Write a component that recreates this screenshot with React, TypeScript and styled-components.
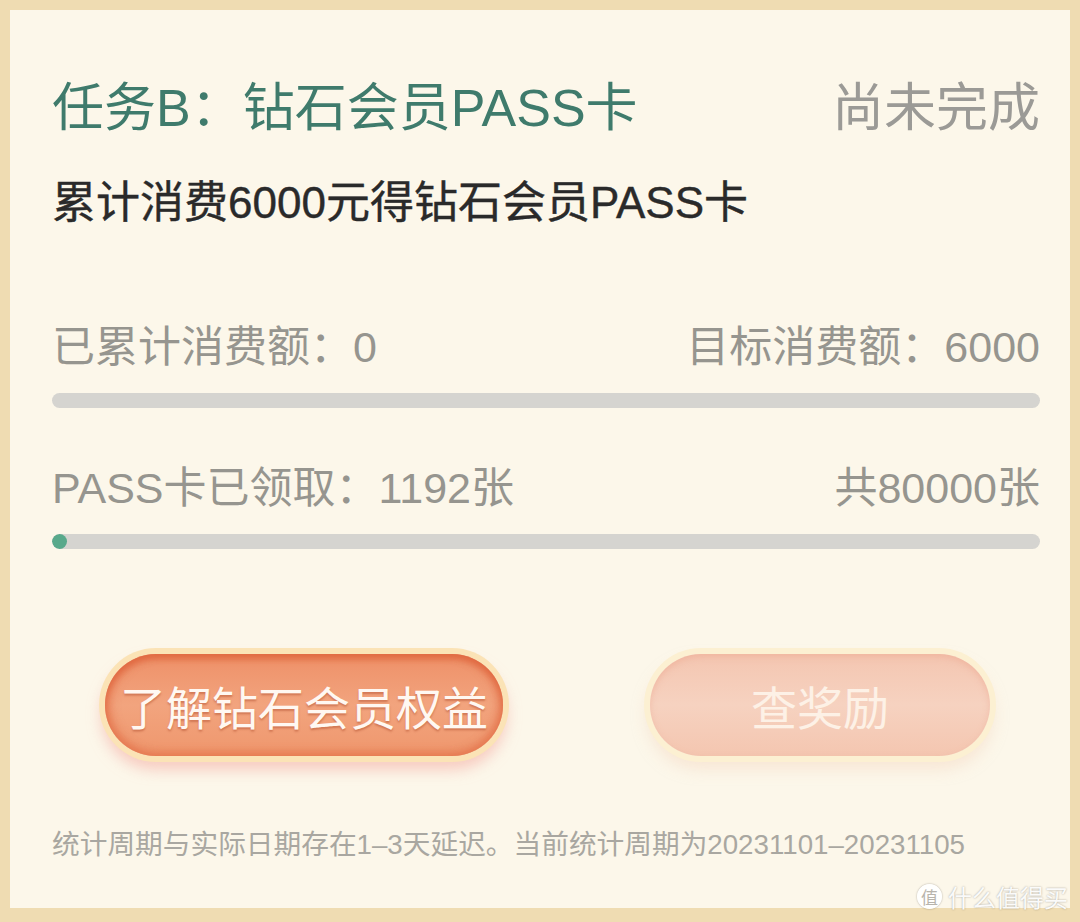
import React from 'react';
import styled, { createGlobalStyle } from 'styled-components';

const FONT = `"Liberation Sans", "Noto Sans CJK SC", sans-serif`;

const GlobalStyle = createGlobalStyle`
  body {
    margin: 0;
    font-family: ${FONT};
    background: #efdcb2;
  }
`;

const Frame = styled.div`
  position: relative;
  width: 1080px;
  height: 922px;
  box-sizing: border-box;
  padding: 10px 10px 14px 10px;
  background: #efdcb2;
`;

const Panel = styled.div`
  height: 100%;
  box-sizing: border-box;
  padding: 68px 30px 0 42px;
  background: #fcf7ea;
  display: flex;
  flex-direction: column;
`;

const HeaderRow = styled.div`
  display: flex;
  justify-content: space-between;
  align-items: center;
  height: 60px;
`;

const Title = styled.div`
  font-family: ${FONT};
  font-size: 52px;
  line-height: 60px;
  color: #3f7b6c;
`;

const Status = styled.div`
  font-family: ${FONT};
  font-size: 52px;
  line-height: 60px;
  color: #9b9a96;
`;

const Subtitle = styled.div`
  margin-top: 37px;
  font-family: ${FONT};
  font-size: 44px;
  line-height: 56px;
  color: #2a2a2a;
  -webkit-text-stroke: 0.4px #2a2a2a;
`;

const StatRow = styled.div<{ $gap: number }>`
  margin-top: ${(p) => p.$gap}px;
  display: flex;
  justify-content: space-between;
  align-items: center;
  height: 50px;
  font-family: ${FONT};
  font-size: 43px;
  line-height: 50px;
  color: #96958f;
`;

const Track = styled.div`
  margin-top: 21px;
  height: 15px;
  border-radius: 8px;
  background: #d5d4d0;
  overflow: hidden;
`;

const Fill = styled.div`
  height: 100%;
  border-radius: 8px;
  background: #58a98b;
`;

const ButtonRow = styled.div`
  margin-top: 105px;
  display: flex;
  justify-content: space-between;
  padding: 0 50px 0 53px;
`;

const PillButton = styled.button<{ $primary?: boolean }>`
  height: 102px;
  width: ${(p) => (p.$primary ? 398 : 340)}px;
  border: none;
  border-radius: 51px;
  font-family: ${FONT};
  font-size: 46px;
  cursor: pointer;
  ${(p) =>
    p.$primary
      ? `
    color: #fff8f2;
    text-shadow: 0 2px 2px rgba(170, 70, 40, 0.45);
    background: linear-gradient(180deg, #ee9068 0%, #f2a47e 50%, #ef976d 100%);
    box-shadow:
      inset 0 5px 6px rgba(222, 100, 60, 0.8),
      inset 0 -4px 8px rgba(230, 120, 80, 0.6),
      inset 6px 0 8px rgba(230, 115, 75, 0.5),
      inset -6px 0 8px rgba(230, 115, 75, 0.5),
      0 0 0 6px #fbe3b6,
      0 10px 14px 4px rgba(244, 170, 160, 0.55);
  `
      : `
    color: #fdf1e6;
    background: linear-gradient(180deg, #f4c6b1 0%, #f6d2c0 50%, #f4c6b0 100%);
    box-shadow:
      inset 0 3px 6px rgba(236, 170, 145, 0.55),
      0 0 0 6px #fcf0d2,
      0 10px 14px 4px rgba(246, 218, 196, 0.5);
  `}
`;

const Footnote = styled.div`
  margin-top: 71px;
  font-family: ${FONT};
  font-size: 27.7px;
  line-height: 36px;
  color: #a9a7a1;
`;

const Watermark = styled.div`
  position: absolute;
  right: 12px;
  bottom: 8px;
  display: flex;
  align-items: center;
  gap: 6px;
  font-family: "Noto Sans CJK SC", sans-serif;
  font-size: 24px;
  color: rgba(255, 255, 255, 0.95);
  text-shadow: 0 0 2px rgba(0, 0, 0, 0.35);
`;

const MarkBadge = styled.span`
  width: 25px;
  height: 25px;
  border-radius: 50%;
  background: rgba(255, 255, 255, 0.95);
  box-shadow: 0 0 2px rgba(0, 0, 0, 0.35);
  color: #b8b4ac;
  text-shadow: none;
  font-size: 17px;
  display: flex;
  align-items: center;
  justify-content: center;
`;

const spent = 0;
const target = 6000;
const claimed = 1192;
const total = 80000;

const App: React.FC = () => {
  // keep a visible dot even when the share is tiny
  const claimedPct = Math.max((claimed / total) * 100, 1.4);
  const spentPct = (spent / target) * 100;

  return (
    <>
      <GlobalStyle />
      <Frame>
        <Panel>
          <HeaderRow>
            <Title>任务B：钻石会员PASS卡</Title>
            <Status>尚未完成</Status>
          </HeaderRow>
          <Subtitle>累计消费6000元得钻石会员PASS卡</Subtitle>

          <StatRow $gap={91}>
            <span>已累计消费额：{spent}</span>
            <span>目标消费额：{target}</span>
          </StatRow>
          <Track>
            <Fill style={{ width: `${spentPct}%` }} />
          </Track>

          <StatRow $gap={55}>
            <span>PASS卡已领取：{claimed}张</span>
            <span>共{total}张</span>
          </StatRow>
          <Track>
            <Fill style={{ width: `${claimedPct}%` }} />
          </Track>

          <ButtonRow>
            <PillButton $primary>了解钻石会员权益</PillButton>
            <PillButton>查奖励</PillButton>
          </ButtonRow>

          <Footnote>统计周期与实际日期存在1–3天延迟。当前统计周期为20231101–20231105</Footnote>
        </Panel>
        <Watermark>
          <MarkBadge>值</MarkBadge>
          什么值得买
        </Watermark>
      </Frame>
    </>
  );
};

export default App;
